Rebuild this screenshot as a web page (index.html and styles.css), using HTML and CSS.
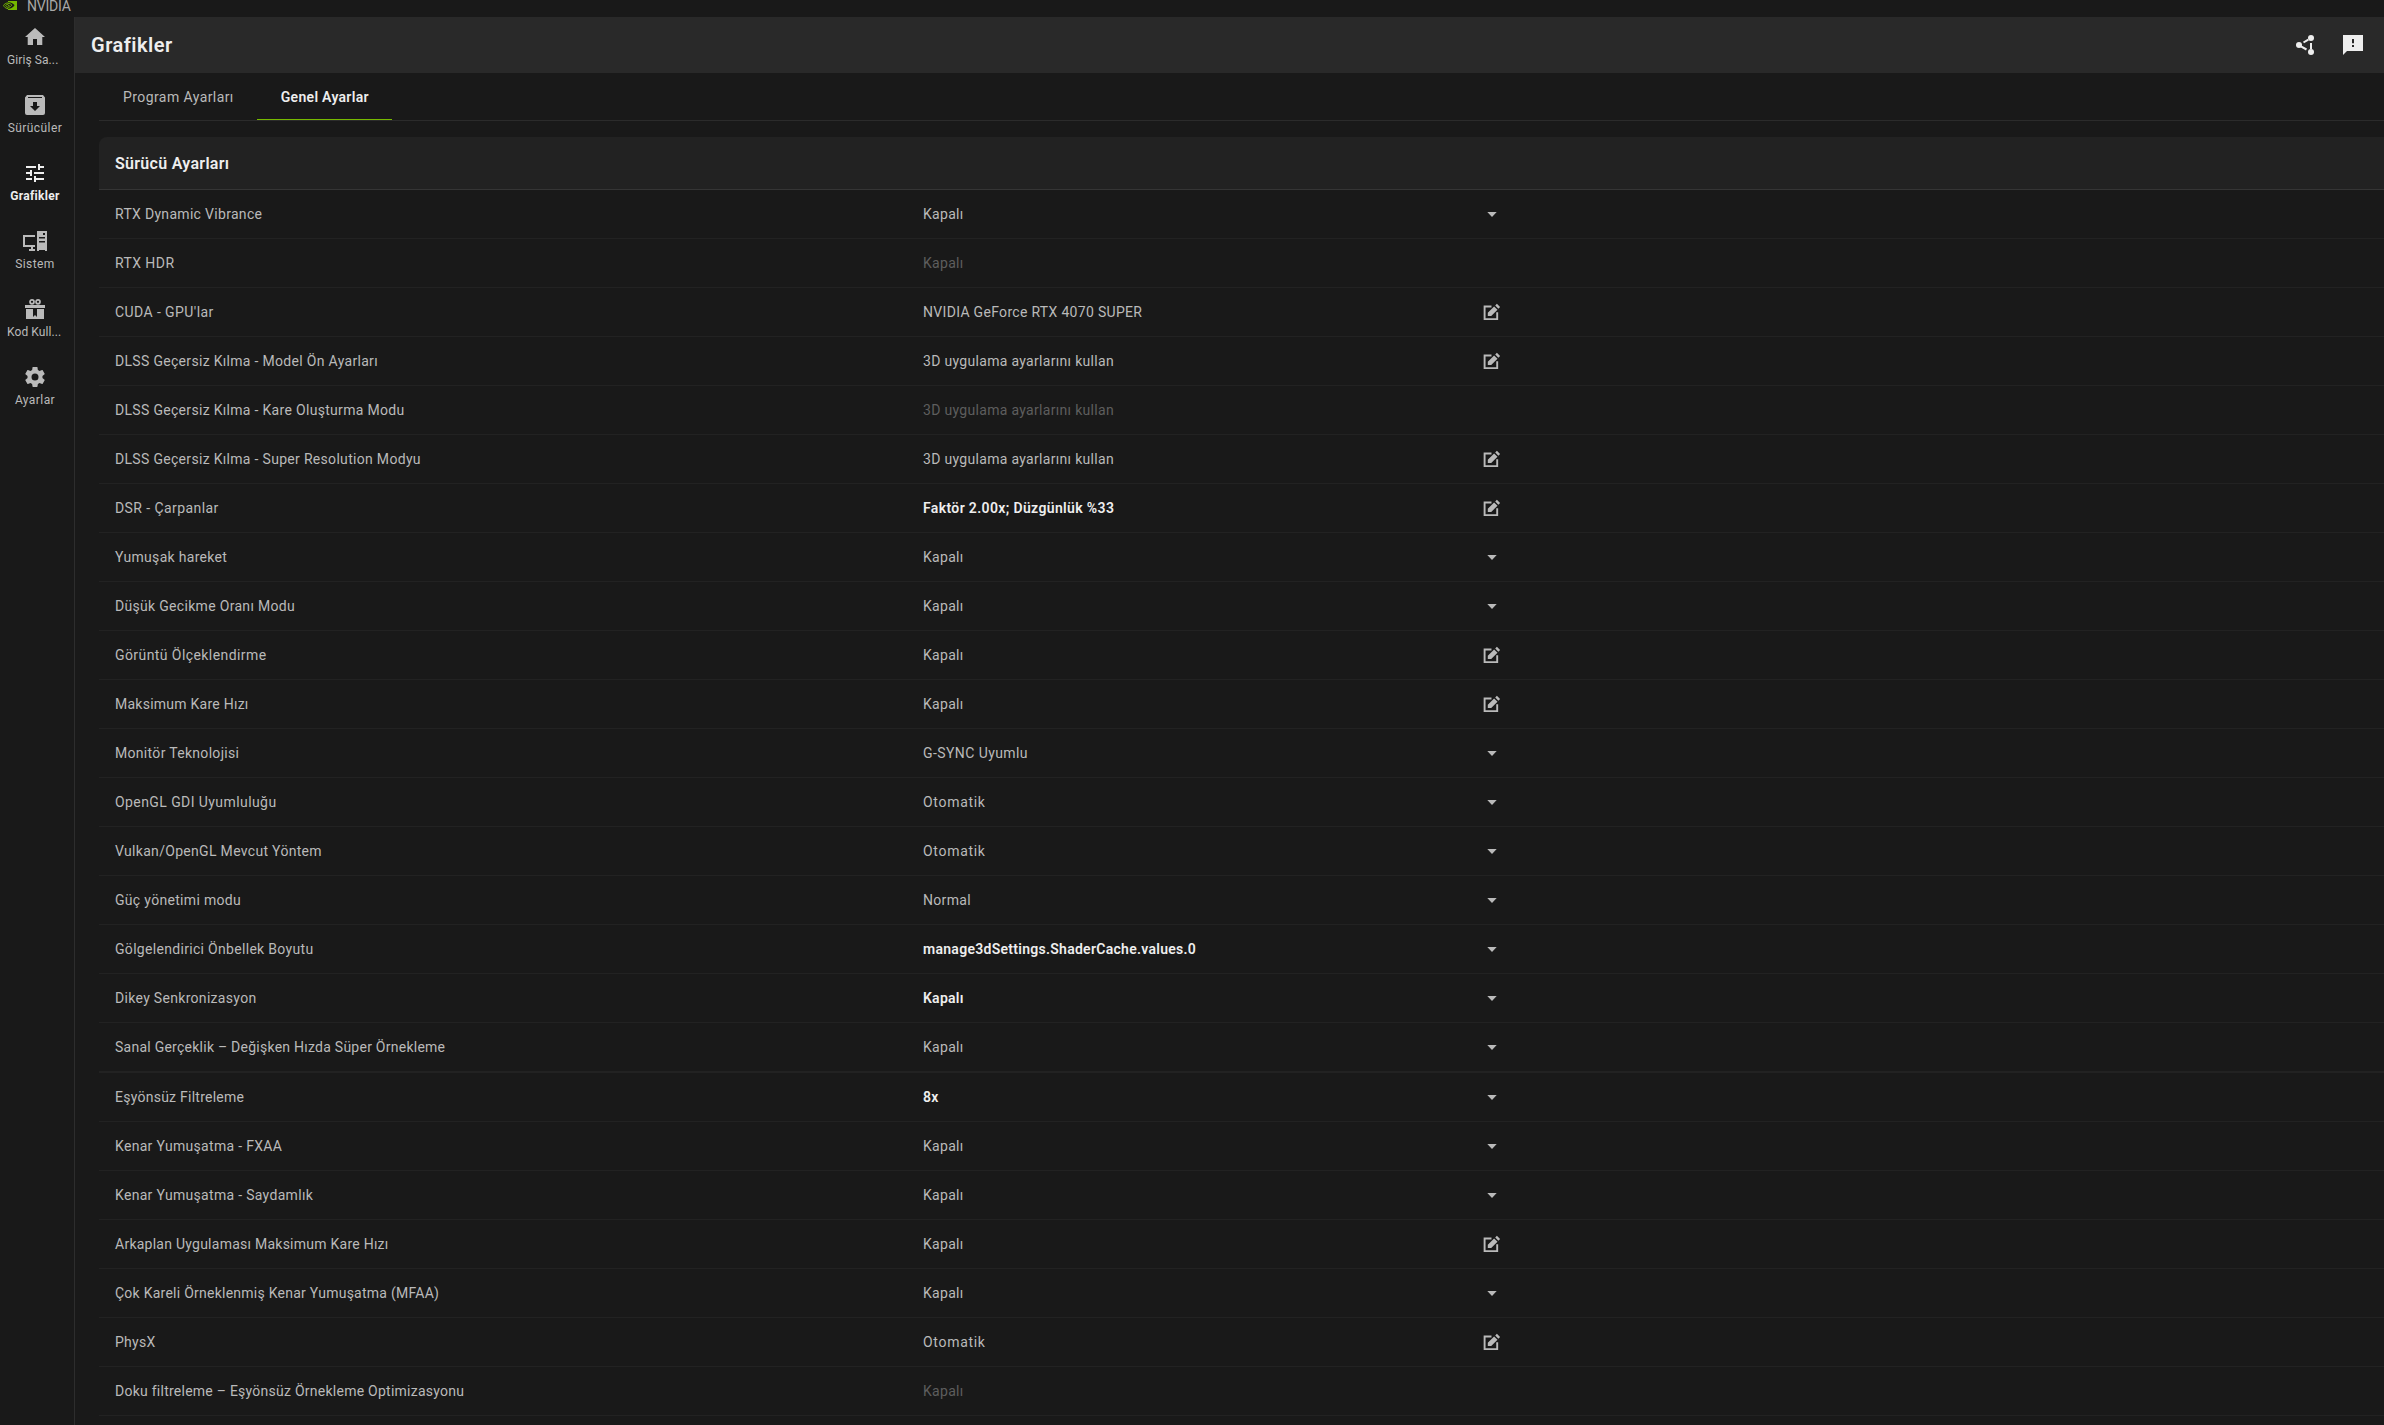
FILE: index.html
```
<!DOCTYPE html>
<html lang="tr">
<head>
<meta charset="utf-8">
<title>NVIDIA</title>
<link rel="stylesheet" href="styles.css">
</head>
<body>
<svg class="sprite" aria-hidden="true">
  <symbol id="i-edit" viewBox="0 0 18 18"><path d="M8.5 3.5H1.6v12.6h12.6V9.3" fill="none" stroke="currentColor" stroke-width="1.9"/><path d="M4.800 12.900V9.800l6.300-6.300 3.400 3.300-6.300 6.100zM12.200 2.500l1.700-1.700 3.200 3.200-1.700 1.700z" fill="currentColor"/></symbol>
  <symbol id="i-caret" viewBox="0 0 10 5"><path d="M.3 0h9.4L5 5z" fill="currentColor"/></symbol>
</svg>
<header class="titlebar">
  <svg class="logo" viewBox="0 0 14 9"><path fill="#76b900" d="M5 0h9v9H5z"/><path fill="#191919" d="M5 1.200c3.400-.2 5.400 1.700 6.500 3C10 6.400 8 7.800 5 7.700z"/><path fill="none" stroke="#76b900" stroke-width="1" d="M5 1.900C2.800 2 1.200 3.300.5 4.300c.8 1.900 2.400 3.200 4.500 3.400M5 3.300c-1.300.1-2 .6-2.400 1.200.5 1.100 1.300 1.500 2.400 1.700 1.800.1 3-.9 3.900-2C7.900 3.200 6.700 2.200 5 2.400M5 4.300c.8-.1 1.300.2 1.600.6"/></svg>
  <span>NVIDIA</span>
</header>
<div class="app">
  <nav class="sidebar">
    <a class="nav"><svg viewBox="0 0 24 24"><path d="M10 20v-6h4v6h5.300v-8H22L12 3 2 12h2.700v8z"/></svg><span class="cut">Giriş Sa...</span></a>
    <a class="nav"><svg viewBox="0 0 24 24"><path fill-rule="evenodd" d="M4 2h16l2 2.500V20a2 2 0 0 1-2 2H4a2 2 0 0 1-2-2V4.500zM5 4v1h14V4zM10 9v4H7l5 5 5-5h-3V9z"/></svg><span>Sürücüler</span></a>
    <a class="nav active"><svg viewBox="0 0 24 24"><path d="M3 17v2h6v-2H3zM3 5v2h10V5H3zm10 16v-2h8v-2h-8v-2h-2v6h2zM7 9v2H3v2h4v2h2V9H7zm14 4v-2H11v2h10zm-6-4h2V7h4V5h-4V3h-2v6z"/></svg><span>Grafikler</span></a>
    <a class="nav"><svg viewBox="0 0 24 24"><path fill-rule="evenodd" d="M0 6h12v2H2v8h10v2h-2v2h2v2H6v-2h2v-2H0zM14 2h10v20h-2v-1h-6v1h-2zM20 4v2h2V4zM16 8v1.500h6V8zM16 12v1.500h6V12z"/></svg><span>Sistem</span></a>
    <a class="nav"><svg viewBox="0 0 24 24"><circle cx="9" cy="4.800" r="2" fill="none" stroke="currentColor" stroke-width="1.700"/><circle cx="15" cy="4.800" r="2" fill="none" stroke="currentColor" stroke-width="1.700"/><path d="M2 8h20v3H2zM3 12h7v10H3zM14 12h7v10h-7zM10 20l2-2 2 2v2h-4z"/></svg><span class="cut">Kod Kull...</span></a>
    <a class="nav"><svg viewBox="0 0 24 24"><path fill-rule="evenodd" d="M19.430 12.980c.04-.32.070-.64.070-.98s-.03-.66-.07-.98l2.110-1.650c.19-.15.24-.42.120-.64l-2-3.460c-.12-.22-.39-.3-.61-.22l-2.490 1c-.52-.4-1.080-.73-1.690-.98l-.38-2.650C14.460 2.180 14.250 2 14 2h-4c-.25 0-.46.180-.49.420l-.38 2.650c-.61.250-1.170.59-1.690.98l-2.490-1c-.23-.09-.49 0-.61.220l-2 3.460c-.13.220-.07.490.120.640l2.110 1.650c-.04.320-.07.650-.07.980s.03.660.070.980l-2.110 1.650c-.19.150-.24.420-.12.640l2 3.460c.12.220.39.300.61.220l2.490-1c.52.400 1.080.730 1.690.980l.38 2.650c.03.240.24.420.49.420h4c.25 0 .46-.18.490-.42l.38-2.650c.61-.25 1.170-.59 1.690-.98l2.490 1c.23.090.49 0 .61-.22l2-3.460c.12-.22.070-.49-.12-.64zM12 15.500a3.500 3.500 0 1 1 0-7 3.500 3.500 0 0 1 0 7z"/></svg><span>Ayarlar</span></a>
  </nav>
  <main class="main">
    <div class="pagehead">
      <h1>Grafikler</h1>
      <div class="tools">
        <svg viewBox="0 0 20 20"><circle cx="16" cy="3" r="3"/><circle cx="4" cy="10" r="3"/><circle cx="16" cy="17" r="3"/><path d="M8.500 7.500l4.800-2.900M5.500 11.200l6 3.300M16 8v6" fill="none" stroke="currentColor" stroke-width="2"/></svg>
        <svg viewBox="0 0 20 20"><path fill-rule="evenodd" d="M0 0h20v16H4l-4 4zM9 4v4.200h2V4zM9 10v2h2v-2z"/></svg>
      </div>
    </div>
    <div class="tabs"><a class="tab"><span class="wide">Program Ayarları</span></a><a class="tab on"><span>Genel Ayarlar</span></a></div>
    <section class="card">
      <h2>Sürücü Ayarları</h2>
      <div class="row"><span>RTX Dynamic Vibrance</span><span>Kapalı</span><svg class="caret"><use href="#i-caret"/></svg></div>
      <div class="row"><span class="wide">RTX HDR</span><span class="off">Kapalı</span></div>
      <div class="row"><span class="wide">CUDA - GPU'lar</span><span>NVIDIA GeForce RTX 4070 SUPER</span><svg class="edit"><use href="#i-edit"/></svg></div>
      <div class="row"><span>DLSS Geçersiz Kılma - Model Ön Ayarları</span><span>3D uygulama ayarlarını kullan</span><svg class="edit"><use href="#i-edit"/></svg></div>
      <div class="row"><span>DLSS Geçersiz Kılma - Kare Oluşturma Modu</span><span class="off">3D uygulama ayarlarını kullan</span></div>
      <div class="row"><span>DLSS Geçersiz Kılma - Super Resolution Modyu</span><span>3D uygulama ayarlarını kullan</span><svg class="edit"><use href="#i-edit"/></svg></div>
      <div class="row"><span class="wide">DSR - Çarpanlar</span><span class="set">Faktör 2.00x; Düzgünlük %33</span><svg class="edit"><use href="#i-edit"/></svg></div>
      <div class="row"><span>Yumuşak hareket</span><span>Kapalı</span><svg class="caret"><use href="#i-caret"/></svg></div>
      <div class="row"><span>Düşük Gecikme Oranı Modu</span><span>Kapalı</span><svg class="caret"><use href="#i-caret"/></svg></div>
      <div class="row"><span class="wide">Görüntü Ölçeklendirme</span><span>Kapalı</span><svg class="edit"><use href="#i-edit"/></svg></div>
      <div class="row"><span class="tight">Maksimum Kare Hızı</span><span>Kapalı</span><svg class="edit"><use href="#i-edit"/></svg></div>
      <div class="row"><span>Monitör Teknolojisi</span><span class="wide">G-SYNC Uyumlu</span><svg class="caret"><use href="#i-caret"/></svg></div>
      <div class="row"><span class="wide">OpenGL GDI Uyumluluğu</span><span class="wider">Otomatik</span><svg class="caret"><use href="#i-caret"/></svg></div>
      <div class="row"><span>Vulkan/OpenGL Mevcut Yöntem</span><span class="wider">Otomatik</span><svg class="caret"><use href="#i-caret"/></svg></div>
      <div class="row"><span>Güç yönetimi modu</span><span>Normal</span><svg class="caret"><use href="#i-caret"/></svg></div>
      <div class="row"><span>Gölgelendirici Önbellek Boyutu</span><span class="set key">manage3dSettings.ShaderCache.values.0</span><svg class="caret"><use href="#i-caret"/></svg></div>
      <div class="row"><span>Dikey Senkronizasyon</span><span class="set tight">Kapalı</span><svg class="caret"><use href="#i-caret"/></svg></div>
      <div class="row thick"><span class="tight">Sanal Gerçeklik – Değişken Hızda Süper Örnekleme</span><span>Kapalı</span><svg class="caret"><use href="#i-caret"/></svg></div>
      <div class="row"><span class="tight">Eşyönsüz Filtreleme</span><span class="set">8x</span><svg class="caret"><use href="#i-caret"/></svg></div>
      <div class="row"><span>Kenar Yumuşatma - FXAA</span><span>Kapalı</span><svg class="caret"><use href="#i-caret"/></svg></div>
      <div class="row"><span>Kenar Yumuşatma - Saydamlık</span><span>Kapalı</span><svg class="caret"><use href="#i-caret"/></svg></div>
      <div class="row"><span class="tight">Arkaplan Uygulaması Maksimum Kare Hızı</span><span>Kapalı</span><svg class="edit"><use href="#i-edit"/></svg></div>
      <div class="row"><span class="tight">Çok Kareli Örneklenmiş Kenar Yumuşatma (MFAA)</span><span>Kapalı</span><svg class="caret"><use href="#i-caret"/></svg></div>
      <div class="row"><span class="tight">PhysX</span><span class="wider">Otomatik</span><svg class="edit"><use href="#i-edit"/></svg></div>
      <div class="row"><span class="tight">Doku filtreleme – Eşyönsüz Örnekleme Optimizasyonu</span><span class="off">Kapalı</span></div>
    </section>
  </main>
</div>
</body>
</html>
```
FILE: styles.css
```
* { box-sizing: border-box; }
body {
  margin: 0;
  height: 100vh;
  overflow: hidden;
  display: flex;
  flex-direction: column;
  background: #191919;
  color: #bababa;
  font: 14px/20px Roboto, "Noto Sans", sans-serif;
  letter-spacing: .31px;
}
svg { display: block; fill: currentColor; flex: none; }
.sprite { display: none; }
.titlebar {
  height: 17px;
  flex: none;
  display: flex;
  padding-left: 3px;
  gap: 10px;
  line-height: 12px;
  letter-spacing: -.2px;
  color: #a8a8a8;
}
.logo { width: 14px; height: 9px; margin-top: 1px; }
.app { flex: 1; min-height: 0; display: flex; }
.sidebar { width: 74px; flex: none; }
.nav {
  width: 70px;
  height: 68px;
  padding-top: 8px;
  display: flex;
  flex-direction: column;
  align-items: center;
  font-size: 12px;
  line-height: 16px;
  letter-spacing: .43px;
}
.nav svg { width: 24px; height: 24px; margin-bottom: 3px; }
.nav .cut { letter-spacing: .09px; align-self: flex-start; padding-left: 7px; }
.nav.active { color: #eee; font-weight: 700; letter-spacing: .33px; }
.main { flex: 1; min-width: 0; border-left: 1px solid #2d2d2d; }
.pagehead {
  height: 56px;
  background: #292929;
  display: flex;
  align-items: center;
  justify-content: space-between;
  padding: 0 21px 0 16px;
  color: #eee;
}
h1 { margin: 0; font-size: 20px; line-height: 28px; font-weight: 600; letter-spacing: .5px; }
.tools { display: flex; gap: 28px; }
.tools svg { width: 20px; height: 20px; }
.tabs { display: flex; margin-left: 24px; height: 48px; border-bottom: 1px solid #2b2b2b; }
.tab { padding: 14px 23px 0 24px; height: 47px; }
.tab.on { color: #eee; font-weight: 600; letter-spacing: .3px; border-bottom: 1px solid #76b900; }
.card { margin: 16px 0 0 24px; }
h2 {
  margin: 0;
  height: 53px;
  padding-left: 16px;
  background: #222;
  border-bottom: 1px solid #353535;
  border-top-left-radius: 8px;
  color: #eee;
  font-size: 16px;
  line-height: 53px;
  font-weight: 600;
  letter-spacing: .3px;
}
.row {
  height: 49px;
  display: grid;
  grid-template-columns: 808px 560px 17px;
  align-items: center;
  justify-items: start;
  padding-left: 16px;
  border-bottom: 1px solid #222;
}
.row.thick { height: 50px; border-bottom-width: 2px; }
.edit { width: 18px; height: 18px; }
.caret { width: 10px; height: 5px; justify-self: center; }
.off { color: #5e5e5e; }
.set { color: #eee; font-weight: 600; letter-spacing: .36px; }
.tight { letter-spacing: .25px; }
.key { letter-spacing: .28px; }
.wide { letter-spacing: .42px; }
.wider { letter-spacing: .7px; }
```
